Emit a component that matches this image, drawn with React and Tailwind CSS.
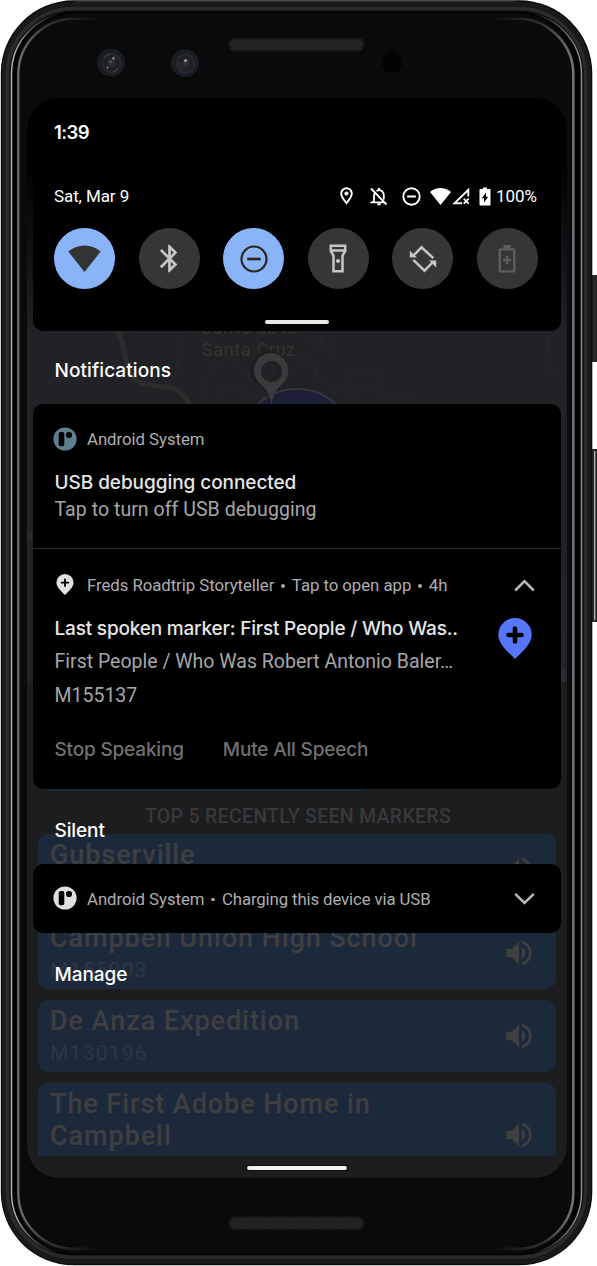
import { MdVolumeUp, MdBluetooth } from "react-icons/md";

const roboto = "font-['Roboto',sans-serif]";
const inter = "font-['Inter',sans-serif]";

function Hardware() {
  return (
    <svg className="absolute inset-0 h-[1266px] w-[597px]" viewBox="0 0 597 1266">
      <defs>
        <linearGradient id="edge" gradientUnits="userSpaceOnUse" x1="0" y1="0" x2="592" y2="0">
          <stop offset="0" stopColor="#b4b4b4" />
          <stop offset="0.024" stopColor="#b4b4b4" />
          <stop offset="0.05" stopColor="#606060" />
          <stop offset="0.1" stopColor="#020202" />
          <stop offset="0.9" stopColor="#020202" />
          <stop offset="0.95" stopColor="#606060" />
          <stop offset="0.976" stopColor="#909090" />
          <stop offset="1" stopColor="#a0a0a0" />
        </linearGradient>
        <linearGradient id="glass" gradientUnits="userSpaceOnUse" x1="0" y1="0" x2="592" y2="0">
          <stop offset="0" stopColor="#66666e" />
          <stop offset="0.035" stopColor="#66666e" />
          <stop offset="0.08" stopColor="#33333a" />
          <stop offset="0.17" stopColor="#0a0a0a" />
          <stop offset="0.83" stopColor="#0a0a0a" />
          <stop offset="0.92" stopColor="#33333a" />
          <stop offset="0.965" stopColor="#74747c" />
          <stop offset="1" stopColor="#7a7a82" />
        </linearGradient>
        <pattern id="mesh" width="3" height="3" patternUnits="userSpaceOnUse">
          <rect width="3" height="3" fill="#1a1a1a" />
          <circle cx="0.8" cy="0.8" r="0.7" fill="#343434" />
          <circle cx="2.3" cy="2.3" r="0.7" fill="#343434" />
        </pattern>
        <linearGradient id="btn" x1="0" x2="1" y1="0" y2="0">
          <stop offset="0" stopColor="#1a1a1a" />
          <stop offset="0.45" stopColor="#2c2c2c" />
          <stop offset="1" stopColor="#1c1c1c" />
        </linearGradient>
        <radialGradient id="lens">
          <stop offset="0" stopColor="#34343c" />
          <stop offset="0.6" stopColor="#1c1c20" />
          <stop offset="1" stopColor="#2b2d31" />
        </radialGradient>
      </defs>
      <rect x="591" y="275" width="8" height="87" rx="1.5" fill="url(#btn)" />
      <rect x="591" y="449" width="8" height="173" rx="1.5" fill="#2b2b2b" />
      <rect x="594" y="451" width="1.3" height="169" fill="#b5b5b5" />
      <rect x="0.8" y="0.3" width="591.5" height="1265" rx="73" fill="#0b0c0c" />
      <path d="M75 1h440" stroke="#4a4f4c" strokeWidth="1.2" />
      <rect x="4" y="4" width="585" height="1258" rx="70" fill="none" stroke="#191b1a" strokeWidth="4" />
      <rect x="7.5" y="8.500" width="577.5" height="1249" rx="66" fill="none" stroke="#292a2a" strokeWidth="4" />
      <rect x="10" y="12" width="573.5" height="1242.5" rx="63" fill="#020202" />
      <rect x="11.500" y="12.800" width="570" height="1241" rx="61" fill="none" stroke="url(#edge)" strokeWidth="1.500" />
      <rect x="16.500" y="13.500" width="559" height="1240" rx="58" fill="#0a0a0a" />
      <rect x="18.300" y="18.800" width="555" height="1230" rx="56" fill="none" stroke="url(#glass)" strokeWidth="2.400" />
      <rect x="20.500" y="20.500" width="550.5" height="1226.5" rx="54" fill="#0a0a0a" />
      <rect x="228" y="37.5" width="137" height="14" rx="7" fill="#161616" />
      <rect x="230" y="39.5" width="133" height="10.5" rx="5.2" fill="url(#mesh)" />
      <rect x="228" y="1216" width="137" height="14" rx="7" fill="#161616" />
      <rect x="230" y="1218" width="133" height="10.5" rx="5.2" fill="url(#mesh)" />
      <circle cx="111" cy="62.5" r="14" fill="#171d22" />
      <circle cx="111.5" cy="63" r="10" fill="url(#lens)" />
      <circle cx="113.500" cy="58.3" r="1.2" fill="#8f91b0" />
      <circle cx="110.500" cy="61.5" r="1.6" fill="#4c4e74" />
      <circle cx="107.5" cy="67.5" r="1" fill="#8a8a92" />
      <path d="M104 58a9 9 0 0 1 5-3.500M118 68a9 9 0 0 1-5 4" stroke="#45464c" fill="none" />
      <circle cx="185" cy="63" r="14" fill="#171d22" />
      <circle cx="185.500" cy="63.500" r="10" fill="url(#lens)" />
      <circle cx="185.500" cy="60.500" r="1.600" fill="#9a9aa6" />
      <path d="M179 62a6 6 0 0 0 4 7" stroke="#3e3f44" fill="none" />
      <circle cx="392" cy="62.500" r="10.200" fill="#030305" />
    </svg>
  );
}

function MapArt() {
  return (
    <svg className="h-[584px] w-[540px] shrink-0" viewBox="27 98 540 584">
      <defs>
        <linearGradient id="fade" x1="0" x2="0" y1="0" y2="1">
          <stop offset="0" stopColor="#000" />
          <stop offset="0.12" stopColor="#020203" />
          <stop offset="0.25" stopColor="#0f1013" />
          <stop offset="0.4" stopColor="#202226" />
          <stop offset="1" stopColor="#212327" />
        </linearGradient>
      </defs>
      <rect x="27" y="98" width="540" height="584" fill="url(#fade)" />
      <g fill="none" stroke="#27292d" strokeWidth="1">
        <path d="M179 331l-2 40-8 12M200 395l12-30 20-8 18 22M215 404l8-18 30 8 20-14M240 404l6-14M300 345l22-8-2 12-14 4-10 12M335 340l-2 12 2 10M300 362l18 4-4 14 30 8 20 16M345 378l4-10 28 6 4 12-32 2zM548 335l-2 30 6 6 14 6M380 392l40 10" />
      </g>
      <path d="M113 326c12 10 10 28 15 42 8 22 30 16 44 20 10 3 13 9 18 17" fill="none" stroke="#2d2c2d" strokeWidth="5" />
      <circle cx="297" cy="447" r="58" fill="#1d2036" stroke="#3a3b41" strokeWidth="1.500" />
      <g fill="#3b302c" className="font-['Roboto',sans-serif]" fontSize="18">
        <text x="201" y="334" textLength="95">Barrio de la</text>
        <text x="202" y="356" textLength="93">Santa Cruz</text>
        <text x="26" y="540" fontSize="14">in</text>
      </g>
      <path fill="#1c1d1f" fillRule="evenodd" d="M269 351a18.500 18.500 0 0 0-10 34c6 5 8 10 11 19 2-9 5-15 11-20a18.500 18.500 0 0 0-12-33zm0 10a9 9 0 1 1 0 18 9 9 0 0 1 0-18z" />
      <path fill="#393a3b" fillRule="evenodd" d="M271.500 353a17.500 17.500 0 0 0-10.500 31.500c6 5 8 10 10.500 19.500 2-9 5-15 10.500-20a17.500 17.500 0 0 0-10.500-31zm0 9.500a9 9 0 1 1 0 18 9 9 0 0 1 0-18z" />
      <circle cx="271.500" cy="371.500" r="9.800" fill="none" stroke="#1c1d1f" strokeWidth="1.500" />
      <path d="M561 664q6 6 6 18h-6z" fill="#2c2d30" />
    </svg>
  );
}

function MarkerCard({ title, code, className = "h-[72px] rounded-[10px]" }) {
  return (
    <div className={`flex shrink-0 items-center overflow-hidden bg-[#1c293b] pl-3 pr-5 text-[#3e3f40] ${className}`}>
      <div className="flex-1 self-start pt-[5px]">
        <div className="text-[27px] font-medium leading-[32px] tracking-[0.930px]">{title}</div>
        {code && <div className="mt-[3px] text-[21px] leading-[26px] tracking-[1.250px] text-[#2e3640]">{code}</div>}
      </div>
      <MdVolumeUp className="size-[34px] shrink-0" />
    </div>
  );
}

function AppBackdrop() {
  return (
    <div className={`absolute inset-0 flex flex-col bg-[#1c1d1f] ${roboto}`}>
      <MapArt />
      <div className="ml-[14px] mt-[98px] h-[11px] w-[329px] shrink-0 rounded-b-[10px] bg-[#1d293a]" />
      <div className="mt-[14px] flex h-[24px] shrink-0 items-center justify-center pl-[2px] text-[19.500px] font-medium tracking-[0.300px] text-[#38393a]">
        TOP 5 RECENTLY SEEN MARKERS
      </div>
      <div className="ml-[11px] mt-[5px] flex w-[518px] flex-col gap-[11px]">
        <MarkerCard title="Gubserville" />
        <MarkerCard title="Campbell Union High School" code="M155903" />
        <MarkerCard title="De Anza Expedition" code="M130196" />
        <MarkerCard
          title={<>The First Adobe Home in<br />Campbell</>}
          className="h-[73px] rounded-t-[10px] [&>svg]:mt-[31px]"
        />
      </div>
    </div>
  );
}

function StatusIcons() {
  return (
    <div className="flex items-center text-white">
      <svg className="mr-[17px] h-[18px] w-[13px]" viewBox="0 0 13 18" fill="none" stroke="currentColor">
        <path strokeWidth="1.900" d="M6.500 16.200C3.500 12.400 1.200 9.700 1.200 6.500a5.300 5.300 0 0 1 10.600 0c0 3.200-2.300 5.900-5.300 9.700z" />
        <circle cx="6.500" cy="6.500" r="2.100" fill="currentColor" stroke="none" />
      </svg>
      <svg className="mr-[14px] h-[19px] w-[18px]" viewBox="0 0 18 19" fill="none" stroke="currentColor" strokeWidth="1.800">
        <path d="M1 1.500l15.500 16M4.700 6.500c-.5 1-.7 2-.7 3v4.500L2 15.300h12M6.500 4c3.300-2.200 7.300 0 7.300 4.500v4" />
        <path d="M9 1v2" strokeWidth="2.200" />
        <path d="M7.300 17.200h3.400" strokeWidth="2" />
      </svg>
      <svg className="mr-[9px] size-[19px]" viewBox="0 0 19 19" fill="none" stroke="currentColor">
        <circle cx="9.500" cy="9.500" r="8.200" strokeWidth="1.900" />
        <path d="M5.200 9.500h8.600" strokeWidth="2.100" />
      </svg>
      <svg className="mr-[1px] h-[17px] w-[21px]" viewBox="0 0 21 17" fill="currentColor">
        <path d="M10.500 17L0 3.900C6-1.300 15-1.300 21 3.900z" />
      </svg>
      <svg className="mr-[9px] h-[18px] w-[18px]" viewBox="0 0 18 18" fill="none" stroke="currentColor">
        <path d="M16.300 9.500V2.800L2.500 16.300h7.500" strokeWidth="1.900" />
        <path d="M11.700 11.700l5 5M16.700 11.700l-5 5" strokeWidth="1.800" />
      </svg>
      <svg className="mr-[5px] h-[19px] w-[12px]" viewBox="0 0 12 19" fill="currentColor" fillRule="evenodd">
        <path d="M4 .5h4V2h2.500c.6 0 1 .4 1 1v14.500c0 .6-.4 1-1 1h-9c-.6 0-1-.4-1-1V3c0-.6.400-1 1-1H4zM7 5.500L2.800 11.300H5v4.200l4.200-5.800H7z" />
      </svg>
      <span className={`text-[17px] leading-6 ${roboto}`}>100%</span>
    </div>
  );
}

function Tile({ on, children }) {
  return (
    <div className={`flex size-[61px] items-center justify-center rounded-full ${on ? "bg-[#8ab4f8] text-[#2c2620]" : "bg-[#363636] text-[#c6c6c6]"}`}>
      {children}
    </div>
  );
}

function QuickSettings() {
  return (
    <div className="ml-[6px] flex h-[233px] w-[528px] shrink-0 flex-col rounded-b-[10px] bg-black pl-[21px] pr-[23px] pt-[23px]">
      <div className={`flex h-6 items-center text-[18.500px] font-semibold tracking-[-0.600px] text-white ${inter}`}>1:39</div>
      <div className="mt-[39px] flex h-6 items-center justify-between pr-px">
        <span className={`pt-[2px] text-[17px] tracking-[-0.100px] text-white ${roboto}`}>Sat, Mar 9</span>
        <StatusIcons />
      </div>
      <div className="mt-[20px] flex justify-between">
        <Tile on>
          <svg className="h-[27px] w-[33px]" viewBox="0 0 33 27" fill="#333333">
            <path d="M16.500 27L.3 6.500C9.500-1.600 23.500-1.600 32.700 6.500z" />
          </svg>
        </Tile>
        <Tile><MdBluetooth className="size-[33px]" /></Tile>
        <Tile on>
          <svg className="size-[28px]" viewBox="0 0 28 28" fill="none" stroke="currentColor">
            <circle cx="14" cy="14" r="12.500" strokeWidth="2.200" />
            <path d="M7.200 14h13.600" strokeWidth="2.600" />
          </svg>
        </Tile>
        <Tile>
          <svg className="h-[29px] w-[18px]" viewBox="0 0 18 29" fill="none" stroke="currentColor" strokeWidth="2.500">
            <path d="M1.800 1.700h14.400v5.500l-2.700 4.300v15.800h-9V11.500L1.800 7.200zM2 6.400h14" />
            <circle cx="9" cy="17" r="2.100" fill="currentColor" stroke="none" />
          </svg>
        </Tile>
        <Tile>
          <svg className="size-[28px]" viewBox="0 0 28 28" fill="none" stroke="currentColor" strokeWidth="2.500">
            <path d="M4.500 10.500l8-8.200 11.800 10.800M23.500 17.500l-8 8.200L4.300 14.900" />
            <path d="M.8 5.400v7.200H8zM27.200 22.600v-7.200H20z" fill="currentColor" stroke="none" />
          </svg>
        </Tile>
        <Tile>
          <svg className="h-[28px] w-[18px] text-[#5e5e5e]" viewBox="0 0 18 28" fill="none" stroke="currentColor" strokeWidth="2.400">
            <rect x="1.800" y="4.400" width="14.400" height="22" rx="0.500" />
            <path d="M5.500 2h7" strokeWidth="4" />
            <path d="M9 11v8M5 15h8" />
          </svg>
        </Tile>
      </div>
      <div className="ml-[211px] mt-[31px] h-[4px] w-[64px] rounded-full bg-[#e8e8e8]" />
    </div>
  );
}

function SystemIcon({ className }) {
  return (
    <svg className={`size-[24px] shrink-0 ${className}`} viewBox="0 0 24 24">
      <circle cx="12" cy="12" r="11.600" fill="currentColor" />
      <rect x="5.700" y="5" width="5.600" height="14.200" rx="2" fill="#000" />
      <rect x="13" y="5" width="6" height="6" rx="2.800" fill="#000" />
    </svg>
  );
}

function PinIcon({ className, cross }) {
  return (
    <svg className={className} viewBox="0 0 34 41">
      <path fill="currentColor" d="M17 41C10.500 34.500.3 26 .3 16.700a16.700 16.700 0 0 1 33.400 0C33.700 26 23.500 34.500 17 41z" />
      <path stroke="#000" strokeLinecap="round" strokeWidth={cross} d="M17 10.500v13M10.500 17h13" />
    </svg>
  );
}

function Chevron({ down }) {
  return (
    <svg className="-mt-[2px] ml-auto h-[13px] w-[21px]" viewBox="0 0 21 13" fill="none" stroke="#b9b9b9" strokeWidth="2.500">
      <path d={down ? "M1.200 1.800l9.300 9.200 9.300-9.200" : "M1.200 11.500l9.300-9.300 9.300 9.300"} />
    </svg>
  );
}

const meta = `flex h-6 items-center whitespace-pre pt-[2px] text-[16.800px] tracking-[-0.050px] text-[#aeaeae] ${roboto}`;
const heading = `flex h-6 items-center whitespace-nowrap pt-[2px] text-[19px] font-medium text-[#e6e6e6] ${inter}`;
const body = `flex h-6 items-center whitespace-nowrap pt-[2px] text-[19.500px] text-[#a6a6a6] ${roboto}`;
const section = `flex shrink-0 items-center pl-[27.500px] text-[19px] font-medium text-white ${inter}`;

function Dot() {
  return <span className="mx-[7px] size-[3.500px] rounded-full bg-[#a8a8a8]" />;
}

export default function App() {
  return (
    <div className="relative h-[1266px] w-[597px] overflow-hidden bg-white">
      <Hardware />
      <div className="pl-[27px] pt-[98px]">
        <div className="relative h-[1080px] w-[540px] overflow-hidden rounded-[32px] bg-black">
          <AppBackdrop />
          <div className="relative flex h-full flex-col">
            <QuickSettings />
            <div className={`${section} h-[73px] pt-[7px] tracking-[0.080px]`}>Notifications</div>

            <div className="ml-[6px] flex h-[385px] w-[528px] shrink-0 flex-col overflow-hidden rounded-[10px] bg-black">
              <div className="h-[145px] border-b border-[#242424] pl-[21.500px] pt-[23px]">
                <div className={`${meta} -ml-[2px]`}>
                  <SystemIcon className="-mt-[3px] mr-[10.500px] text-[#5f7f8e]" />Android System
                </div>
                <div className={`${heading} mt-[19px] tracking-[-0.060px]`}>USB debugging connected</div>
                <div className={`${body} mt-[3px] tracking-[0.050px]`}>Tap to turn off USB debugging</div>
              </div>
              <div className="flex-1 pl-[21.500px] pr-[26px] pt-[24px]">
                <div className={meta}>
                  <PinIcon className="-mt-[3px] ml-[1.500px] mr-[13px] h-[21px] w-[18px] text-[#e0e0e0]" cross="3.500" />
                  <span className="tracking-[-0.060px]">Freds Roadtrip Storyteller</span>
                  <Dot />Tap to open app<Dot />4h
                  <Chevron />
                </div>
                <div className="flex justify-between">
                  <div>
                    <div className={`${heading} mt-[19px] tracking-[-0.190px]`}>Last spoken marker: First People / Who Was..</div>
                    <div className={`${body} mt-[9px]`}>First People / Who Was Robert Antonio Baler…</div>
                    <div className={`${body} mt-[10px]`}>M155137</div>
                  </div>
                  <PinIcon className="mr-[3px] mt-[20.500px] h-[41px] w-[34px] text-[#5677fb]" cross="4.600" />
                </div>
                <div className={`mt-[30px] flex h-6 items-center gap-[39px] pt-[2px] text-[19px] font-medium tracking-[-0.180px] text-[#717171] ${inter}`}>
                  <span>Stop Speaking</span>
                  <span>Mute All Speech</span>
                </div>
              </div>
            </div>

            <div className={`${section} h-[75px] pt-[9px] tracking-[-0.100px]`}>Silent</div>

            <div className={`${meta} ml-[6px] h-[69px]! w-[528px] shrink-0 rounded-[10px] bg-black pl-[20px] pr-[26px]`}>
              <SystemIcon className="-mt-[3px] mr-[10px] text-[#dfdfdf]" />Android System
              <Dot />
              <span className="tracking-[-0.120px]">Charging this device via USB</span>
              <Chevron down />
            </div>

            <div className={`${section} mt-[29px] h-6 pt-[2px] tracking-[-0.080px]`}>Manage</div>
            <div className="mb-[8px] ml-[220px] mt-auto h-[4px] w-[100px] rounded-full bg-[#f0f0f2] ring-1 ring-black/60" />
          </div>
        </div>
      </div>
    </div>
  );
}
